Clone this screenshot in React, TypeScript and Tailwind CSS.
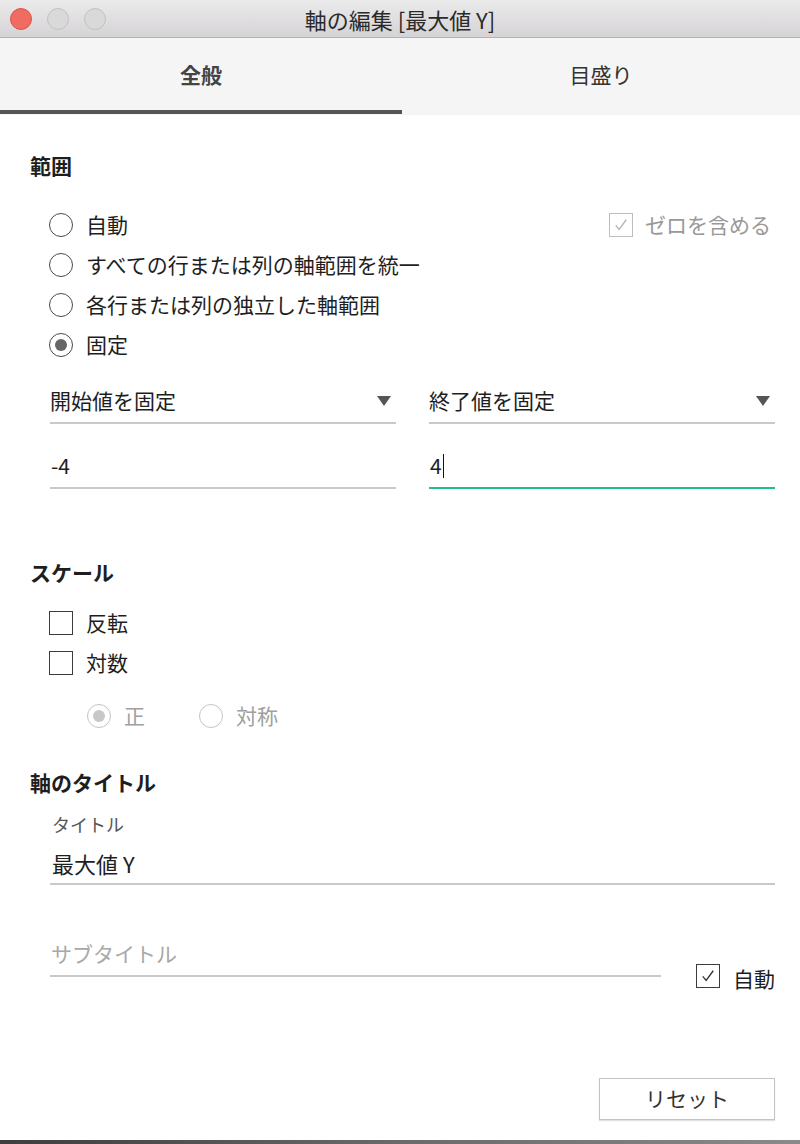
import React from "react";

function Radio({ checked = false, disabled = false }: { checked?: boolean; disabled?: boolean }) {
  return (
    <span
      className={`grid h-[24px] w-[24px] shrink-0 place-items-center rounded-full border-[1.5px] bg-white ${
        disabled ? "border-[#c4c4c4]" : "border-[#4a4a4a]"
      }`}
    >
      {checked && (
        <span className={`h-[12px] w-[12px] rounded-full ${disabled ? "bg-[#c8c8c8]" : "bg-[#666]"}`} />
      )}
    </span>
  );
}

function Check({ checked = false, disabled = false }: { checked?: boolean; disabled?: boolean }) {
  return (
    <span
      className={`grid h-[24px] w-[24px] shrink-0 place-items-center border-[1.5px] bg-white ${
        disabled ? "border-[#bdbdbd]" : "border-[#3c3c3c]"
      }`}
    >
      {checked && (
        <svg viewBox="0 0 24 24" className="h-[18px] w-[18px]">
          <path
            d="M5 12.5 L9.5 18 L19 5"
            fill="none"
            stroke={disabled ? "#b5b5b5" : "#333"}
            strokeWidth="1.8"
          />
        </svg>
      )}
    </span>
  );
}

function Caret() {
  return (
    <svg viewBox="0 0 14 10" className="h-[10px] w-[14px]">
      <polygon points="0,0 14,0 7,10" fill="#555" />
    </svg>
  );
}

export default function App() {
  return (
    <div className="flex h-[1144px] w-[800px] flex-col overflow-hidden bg-white font-['Noto_Sans_CJK_JP','Noto_Sans',sans-serif] text-[#1e1e1e]">
      {/* window title bar */}
      <div className="relative flex h-[38px] shrink-0 items-center justify-center border-b border-[#b3b3b3] bg-gradient-to-b from-[#ecebec] to-[#d5d3d5]">
        <div className="absolute left-[10px] top-[8px] flex gap-[15px]">
          <span className="h-[22px] w-[22px] rounded-full border border-[#dc5248] bg-[#f06b60]" />
          <span className="h-[22px] w-[22px] rounded-full border border-[#c2c2c2] bg-[#d9d9d9]" />
          <span className="h-[22px] w-[22px] rounded-full border border-[#c2c2c2] bg-[#d9d9d9]" />
        </div>
        <span className="text-[22px] leading-none text-[#2a2a2a]">軸の編集 [最大値 Y]</span>
      </div>

      {/* tabs */}
      <div className="flex h-[77px] shrink-0 bg-[#f5f5f5]">
        <div className="flex w-[402px] flex-col">
          <div className="flex flex-1 items-center justify-center pt-[2px] text-[21px] font-bold text-[#444]">全般</div>
          <div className="mb-[1px] h-[4px] bg-[#555]" />
        </div>
        <div className="flex flex-1 items-center justify-center pb-[3px] text-[21px] text-[#333]">目盛り</div>
      </div>

      <div className="flex flex-1 flex-col pl-[30px] pr-[25px] text-[21px]">
        {/* 範囲 */}
        <div className="mt-[36px] h-[28px] font-bold leading-[28px]">範囲</div>
        <div className="mt-[26px] flex flex-col pl-[19px]">
          <div className="flex h-[40px] items-center justify-between">
            <div className="flex items-center gap-[13px]">
              <Radio />
              <span>自動</span>
            </div>
            <div className="flex items-center gap-[12px] pr-[4px] text-[#999]">
              <Check checked disabled />
              <span>ゼロを含める</span>
            </div>
          </div>
          <div className="flex h-[40px] items-center gap-[13px]">
            <Radio />
            <span>すべての行または列の軸範囲を統一</span>
          </div>
          <div className="flex h-[40px] items-center gap-[13px]">
            <Radio />
            <span>各行または列の独立した軸範囲</span>
          </div>
          <div className="flex h-[40px] items-center gap-[13px]">
            <Radio checked />
            <span>固定</span>
          </div>
        </div>

        <div className="mt-[15px] flex gap-[33px] pl-[20px]">
          <div className="flex flex-1 flex-col">
            <div className="flex h-[44px] items-center justify-between border-b-2 border-[#c9c9c9] pr-[5px]">
              <span>開始値を固定</span>
              <Caret />
            </div>
            <div className="mt-[21px] flex h-[44px] items-center border-b-2 border-[#c9c9c9] pl-[1px]">
              <span>-4</span>
            </div>
          </div>
          <div className="flex flex-1 flex-col">
            <div className="flex h-[44px] items-center justify-between border-b-2 border-[#c9c9c9] pr-[5px]">
              <span>終了値を固定</span>
              <Caret />
            </div>
            <div className="mt-[21px] flex h-[44px] items-center border-b-2 border-[#20bf87] pl-[1px]">
              <span>4</span>
              <span className="ml-[1px] h-[24px] w-[1px] bg-[#111]" />
            </div>
          </div>
        </div>

        {/* スケール */}
        <div className="mt-[69px] h-[28px] font-bold leading-[28px]">スケール</div>
        <div className="mt-[17px] flex flex-col pl-[19px]">
          <div className="flex h-[40px] items-center gap-[13px]">
            <Check />
            <span>反転</span>
          </div>
          <div className="flex h-[40px] items-center gap-[13px]">
            <Check />
            <span>対数</span>
          </div>
          <div className="mt-[13px] flex h-[40px] items-center pl-[38px] text-[#a0a0a0]">
            <div className="flex w-[112px] items-center gap-[13px]">
              <Radio checked disabled />
              <span>正</span>
            </div>
            <div className="flex items-center gap-[13px]">
              <Radio disabled />
              <span>対称</span>
            </div>
          </div>
        </div>

        {/* 軸のタイトル */}
        <div className="mt-[32px] h-[28px] font-bold leading-[28px]">軸のタイトル</div>
        <div className="mt-[16px] flex flex-col pl-[20px]">
          <div className="h-[24px] pl-[2px] text-[18px] leading-[24px] text-[#555]">タイトル</div>
          <div className="mt-[7px] flex h-[42px] items-center border-b-2 border-[#c9c9c9] pl-[2px] text-[22px]">
            最大値 Y
          </div>
          <div className="mt-[47px] flex items-end">
            <div className="flex h-[45px] w-[611px] items-center border-b-2 border-[#c9c9c9] pl-[1px] text-[#a8a8a8]">
              サブタイトル
            </div>
            <div className="mb-[-17px] ml-[35px] flex items-center gap-[13px]">
              <Check checked />
              <span className="pt-[4px]">自動</span>
            </div>
          </div>
        </div>

        <div className="mt-[101px] flex justify-end">
          <button
            type="button"
            className="flex h-[42px] w-[176px] items-center justify-center border border-[#c4c4c4] bg-white text-[21px] text-[#333] shadow-[0_1px_1px_rgba(0,0,0,0.12)]"
          >
            リセット
          </button>
        </div>
      </div>

      <div className="h-[4px] shrink-0 bg-gradient-to-r from-[#3e3e3e] via-[#6a6a6a] to-[#8a8a8a]" />
    </div>
  );
}
